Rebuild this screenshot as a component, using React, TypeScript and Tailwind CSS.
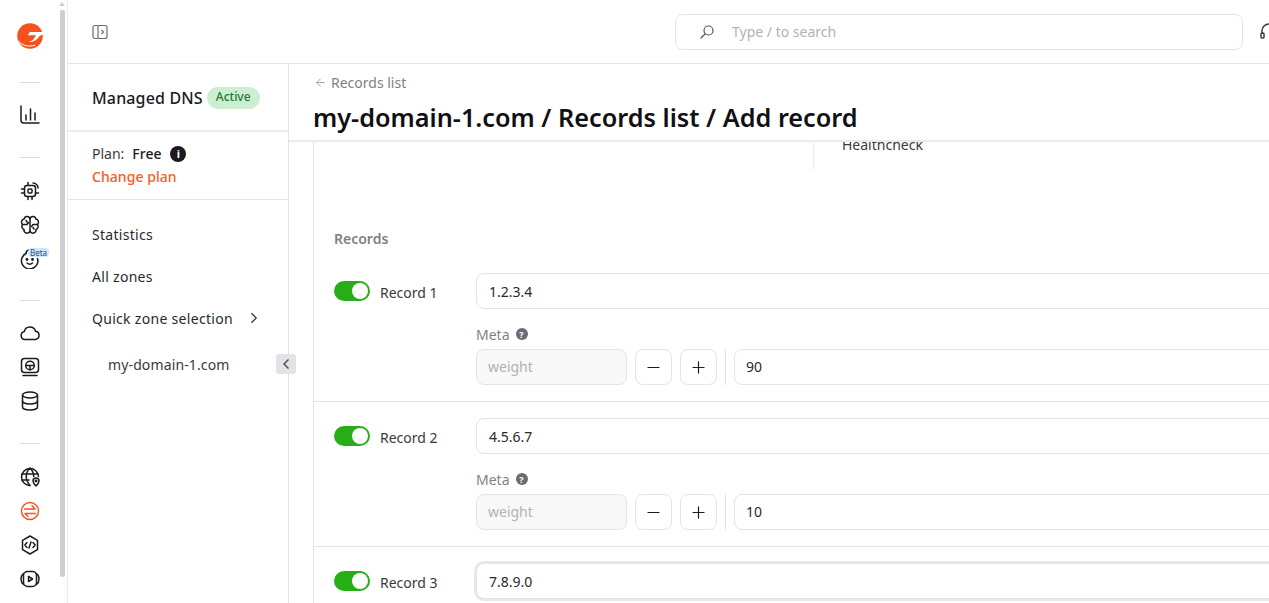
import React from "react";
import { ArrowLeft, ChevronLeft, ChevronRight, Minus, Plus } from "lucide-react";

const base = {
  width: 20,
  height: 20,
  viewBox: "0 0 20 20",
  fill: "none",
  stroke: "currentColor",
  strokeWidth: 1.5,
  strokeLinecap: "round" as const,
  strokeLinejoin: "round" as const,
};

const ChartIcon = () => (
  <svg {...base}>
    <path d="M1 1v14.500a2.500 2.500 0 0 0 2.500 2.500H19" />
    <path d="M6 10v5M10.500 4v11M15 8v7" />
  </svg>
);
const ChipIcon = () => (
  <svg {...base}>
    <rect x="4.500" y="4.500" width="11" height="11" rx="2.500" />
    <rect x="8" y="8" width="4" height="4" rx="1" />
    <path d="M1.500 8h3M1.500 12h3M8 15.500v3M12 15.500v3M8 1.500v3M15.500 12h3M13 2a5 5 0 0 1 5 5" />
  </svg>
);
const BrainIcon = () => (
  <svg {...base}>
    <path d="M10 4v13M10 4a3 3 0 0 0-3-2.500A3 3 0 0 0 4.200 4 3.200 3.200 0 0 0 2.500 9.500a3.200 3.200 0 0 0 1.500 5 3.100 3.100 0 0 0 6 1.500" />
    <path d="M10 4a3 3 0 0 1 3-2.500A3 3 0 0 1 15.800 4a3.200 3.200 0 0 1 1.700 5.500 3.200 3.200 0 0 1-1.500 5 3.100 3.100 0 0 1-6 1.500" />
    <path d="M2.500 9.500H7l1.500-2M17.500 9.500H13l-1.500 2M6 5.500l1 1.500M14 14l-1-1.500" />
  </svg>
);
const BotIcon = () => (
  <svg {...base}>
    <path d="M6 4.500a8.200 8.200 0 1 0 11.500 5" />
    <path d="M6 4.500C6 2.800 7 1.500 8.500 1" />
    <circle cx="7" cy="10.500" r=".7" fill="currentColor" />
    <circle cx="12.500" cy="10.500" r=".7" fill="currentColor" />
    <path d="M7 14c1.500 1.300 4 1.300 5.500 0" />
  </svg>
);
const CloudIcon = () => (
  <svg {...base}>
    <path d="M5 16.500a4 4 0 0 1-.7-7.900 5.800 5.800 0 0 1 11.200-.4 4.200 4.200 0 0 1 0 8.300z" />
  </svg>
);
const ScreenIcon = () => (
  <svg {...base}>
    <rect x="1.500" y="1.500" width="17" height="14" rx="3" />
    <circle cx="10" cy="8.500" r="4.300" />
    <path d="M5.700 8.500h8.600M10 8.500v4.300M3 18.500h14" />
  </svg>
);
const DatabaseIcon = () => (
  <svg {...base}>
    <ellipse cx="10" cy="4" rx="7.500" ry="3" />
    <path d="M2.500 4v12c0 1.700 3.400 3 7.500 3s7.500-1.300 7.500-3V4" />
    <path d="M2.500 10c0 1.700 3.400 3 7.500 3s7.500-1.300 7.500-3" />
  </svg>
);
const GlobePinIcon = () => (
  <svg {...base}>
    <path d="M18.500 9.500A8.500 8.500 0 1 0 10 18.500" />
    <path d="M2 7h16M2 13h7M10 1c-5 5-5 12 0 17.500M10 1c2.500 2.500 3.700 5.500 3.800 8.500" />
    <path d="M16 11a3 3 0 0 0-3 3c0 2 3 5 3 5s3-3 3-5a3 3 0 0 0-3-3z" fill="#fff" />
    <circle cx="16" cy="14" r=".7" fill="currentColor" />
  </svg>
);
const SwapIcon = () => (
  <svg {...base} strokeWidth={1.4}>
    <circle cx="10" cy="10" r="8.500" />
    <path d="M4.500 8H15l-3-3.200M15.500 12.500H5l3 3" />
  </svg>
);
const CodeIcon = () => (
  <svg {...base}>
    <path d="M10 1l7.500 4.300v9.400L10 19l-7.500-4.300V5.300z" />
    <path d="M7 7.500L4.800 10 7 12.500M13 7.500l2.200 2.500-2.200 2.500M11 7l-2 6" />
  </svg>
);
const PlayIcon = () => (
  <svg {...base}>
    <rect x="3.500" y="2.500" width="13" height="15" rx="4" />
    <path d="M3.500 4.500C1.500 6 1 8 1 10s.5 4 2.500 5.500M16.500 4.500C18.500 6 19 8 19 10s-.5 4-2.500 5.500" />
    <path d="M8.500 7.500v5l4-2.500z" />
  </svg>
);

const Logo = () => (
  <svg width="26" height="28" viewBox="0 0 26 28">
    <circle cx="13" cy="15" r="12.800" fill="#f4511e" />
    <path d="M15 1.500C18 2 21 .5 23 0l3 3v5c-2-2.500-6-5.500-11-6.500z" fill="#fff" />
    <path d="M26 11H13L10.500 14.200H19C17.500 18 14 20.500 11.500 21 15.500 21.500 20 19.500 22.500 15L26 13.500z" fill="#fff" />
    <path d="M1.500 20C4 24 11 26.500 18 24.300" fill="none" stroke="#fff" strokeWidth="1" strokeLinecap="round" />
  </svg>
);

const Rule = () => <div className="w-5 h-px bg-[#dddce0] mx-auto" />;

const RailIcon = ({ children, active }: { children: React.ReactNode; active?: boolean }) => (
  <div className={`h-[34px] flex items-center justify-center relative ${active ? "text-[#f4511e]" : "text-[#1b1a1f]"}`}>
    {children}
  </div>
);

const Rail = () => (
  <aside className="w-[68px] shrink-0 h-full flex border-r border-[#ebeaed]">
    <div className="w-[59px] pl-px flex flex-col">
      <div className="h-[70px] pt-[21px] flex justify-center">
        <Logo />
      </div>
      <div className="mt-[12px]"><Rule /></div>
      <div className="mt-[15px]">
        <RailIcon><ChartIcon /></RailIcon>
      </div>
      <div className="mt-[25px]"><Rule /></div>
      <div className="mt-[16px]">
        <RailIcon><ChipIcon /></RailIcon>
        <RailIcon><BrainIcon /></RailIcon>
        <RailIcon>
          <BotIcon />
          <span className="absolute left-[27px] top-[6px] h-[9px] px-[2px] rounded-[4px] bg-[#cfe5fb] text-[8px] leading-[9px] text-[#1c4f86]">Beta</span>
        </RailIcon>
      </div>
      <div className="mt-[24px]"><Rule /></div>
      <div className="mt-[15px]">
        <RailIcon><CloudIcon /></RailIcon>
        <RailIcon><ScreenIcon /></RailIcon>
        <RailIcon><DatabaseIcon /></RailIcon>
      </div>
      <div className="mt-[25px]"><Rule /></div>
      <div className="mt-[16px]">
        <RailIcon><GlobePinIcon /></RailIcon>
        <RailIcon active><SwapIcon /></RailIcon>
        <RailIcon><CodeIcon /></RailIcon>
        <RailIcon><PlayIcon /></RailIcon>
      </div>
    </div>
    <div className="w-[6px] flex flex-col items-center">
      <div className="mt-[2px] w-0 h-0 border-x-[3px] border-x-transparent border-b-[4px] border-b-[#cfcdd4]" />
      <div className="mt-[4px] w-[5px] h-[567px] rounded-full bg-[#cfcdd4]" />
    </div>
  </aside>
);

const Sidebar = () => (
  <aside className="w-[221px] shrink-0 h-full border-r border-[#e4e3e7] relative">
    <div className="h-[68px] border-b-2 border-[#ebeaed] pl-6 pt-[2px] flex items-center gap-[4px]">
      <span className="text-[16px] tracking-[.15px] font-medium text-[#1b1a1f]">Managed DNS</span>
      <span className="h-[22px] px-[9px] rounded-full bg-[#cdeed1] text-[12px] leading-[20px] font-medium text-[#1f7a37]">Active</span>
    </div>
    <div className="h-[68px] border-b border-[#e4e3e7] pl-6 pt-[10px]">
      <div className="flex items-center h-[23px] text-[14px]">
        <span className="text-[#3a393f]">Plan:</span>
        <span className="ml-2 font-medium text-[#1b1a1f]">Free</span>
        <span className="ml-[9px] w-4 h-4 rounded-full bg-[#1b1a1f] text-white flex items-center justify-center text-[11px] leading-none font-bold">i</span>
      </div>
      <div className="text-[14px] tracking-[.05px] leading-[23px] font-medium text-[#fb5a24]">Change plan</div>
    </div>
    <nav className="pl-6 pt-[13px] text-[14px] tracking-[.3px] text-[#2a292e]">
      <div className="h-[42px] flex items-center">Statistics</div>
      <div className="h-[42px] flex items-center">All zones</div>
      <div className="h-[42px] flex items-center">
        Quick zone selection
        <ChevronRight size={18} strokeWidth={1.5} className="ml-[12px]" />
      </div>
      <div className="h-[50px] flex items-center pl-4 tracking-[.13px] text-[#3a393f]">my-domain-1.com</div>
    </nav>
    <button className="absolute right-[-8px] top-[290px] w-5 h-5 rounded-[3px] bg-[#e3e2e6] flex items-center justify-center text-[#55545b]">
      <ChevronLeft size={16} strokeWidth={2.5} />
    </button>
  </aside>
);

const Field = ({ children, focus, muted, className }: { children: React.ReactNode; focus?: boolean; muted?: boolean; className?: string }) => (
  <div
    className={`h-9 rounded-[8px] border border-[#e4e3e7] flex items-center px-3 text-[14px] ${muted ? "bg-[#f8f8f9] text-[#b2b1b8]" : "bg-white text-[#2a292e]"} ${focus ? "ring-2 ring-[#e8e7ec]" : ""} ${className ?? ""}`}
  >
    {children}
  </div>
);

const Stepper = ({ children }: { children: React.ReactNode }) => (
  <button className="w-[37px] h-9 rounded-[8px] border border-[#e4e3e7] bg-white flex items-center justify-center text-[#1b1a1f]">
    {children}
  </button>
);

const RecordRow = ({ name, value, meta, focus, last }: { name: string; value: string; meta?: string; focus?: boolean; last?: boolean }) => (
  <div className={`flex pl-[20px] pb-[16px] ${last ? "" : "border-b border-[#e4e3e7]"}`}>
    <div className="w-[142px] shrink-0 h-9 flex items-center">
      <span className="w-9 h-5 rounded-full bg-[#27ae16] flex items-center justify-end pr-[2px]">
        <span className="w-4 h-4 rounded-full bg-white" />
      </span>
      <span className="ml-[10px] pt-[2px] text-[14px] text-[#3a393f]">{name}</span>
    </div>
    <div className="flex-1">
      <Field focus={focus}><span>{value}</span></Field>
      {meta && (
        <>
          <div className="mt-[13px] mb-[3px] h-[24px] flex items-center gap-[6px] text-[14px] text-[#807f87]">
            Meta
            <span className="w-3 h-3 rounded-full bg-[#6c6b73] text-white flex items-center justify-center text-[9px] leading-none font-bold">?</span>
          </div>
          <div className="flex items-center gap-2">
            <Field muted className="w-[151px] shrink-0"><span className="-ml-px pb-[2px]">weight</span></Field>
            <Stepper><Minus size={19} strokeWidth={1.5} /></Stepper>
            <Stepper><Plus size={19} strokeWidth={1.5} /></Stepper>
            <div className="w-px h-9 bg-[#e4e3e7]" />
            <Field className="flex-1"><span className="-ml-px pb-[2px]">{meta}</span></Field>
          </div>
        </>
      )}
    </div>
  </div>
);

const App = () => (
  <div className="w-[1269px] h-[603px] overflow-hidden flex bg-white font-['Noto_Sans',sans-serif]">
    <Rail />
    <div className="flex-1 min-w-0 h-full flex flex-col">
      <header className="h-[64px] shrink-0 border-b border-[#e4e3e7] flex items-center pl-[24px] overflow-hidden">
        <svg className="shrink-0" width="16" height="16" viewBox="0 0 16 16" fill="none" stroke="#6c6b73" strokeWidth="1.2">
          <rect x="1" y="1.500" width="14" height="13" rx="2" />
          <path d="M6 1.500v13M9.500 6l2 2-2 2" />
        </svg>
        <div className="ml-[567px] w-[568px] h-9 rounded-[8px] border border-[#e4e3e7] flex items-center pl-[23px] shrink-0">
          <svg width="16" height="16" viewBox="0 0 16 16" fill="none" stroke="#55545b" strokeWidth="1.2" strokeLinecap="round">
            <circle cx="9.500" cy="6.500" r="4.500" />
            <path d="M6 10l-4 4" />
          </svg>
          <span className="ml-[17px] text-[14px] text-[#b2b1b8]">Type / to search</span>
        </div>
        <svg className="ml-[16px] shrink-0" width="20" height="20" viewBox="0 0 20 20" fill="none" stroke="#3a393f" strokeWidth="1.500">
          <path d="M3 12V9a7 7 0 0 1 14 0v3" />
          <rect x="2" y="11" width="3" height="5" rx="1" />
        </svg>
      </header>
      <div className="flex-1 min-h-0 flex">
        <Sidebar />
        <main className="flex-1 min-w-0 h-full flex flex-col">
          <div className="h-[78px] shrink-0 pl-[25px] pt-[8px] border-b-2 border-[#ebeaed]">
            <div className="flex items-center h-5 text-[14px] text-[#807f87]">
              <ArrowLeft size={13} strokeWidth={1.25} className="mr-[4px]" />
              Records list
            </div>
            <h1 className="mt-[7px] -ml-px text-[25.250px] leading-[36px] font-semibold text-[#111014] whitespace-nowrap">
              my-domain-1.com / Records list / Add record
            </h1>
          </div>
          <div className="flex-1 min-h-0 ml-[24px] border-l border-[#e4e3e7] w-[1200px] shrink-0 flex flex-col">
            <div className="h-[28px] ml-[499px] pl-[28px] border-l border-[#ebeaed] overflow-hidden flex items-end shrink-0">
              <span className="text-[14px] leading-[20px] text-[#3a393f] mb-[15px]">Healthcheck</span>
            </div>
            <div className="pl-[20px] mt-[58px] h-[20px] flex items-center text-[14px] font-semibold text-[#807f87]">Records</div>
            <div className="mt-[25px] flex flex-col gap-[16px]">
              <RecordRow name="Record 1" value="1.2.3.4" meta="90" />
              <RecordRow name="Record 2" value="4.5.6.7" meta="10" />
              <RecordRow name="Record 3" value="7.8.9.0" focus last />
            </div>
          </div>
        </main>
      </div>
    </div>
  </div>
);

export default App;
